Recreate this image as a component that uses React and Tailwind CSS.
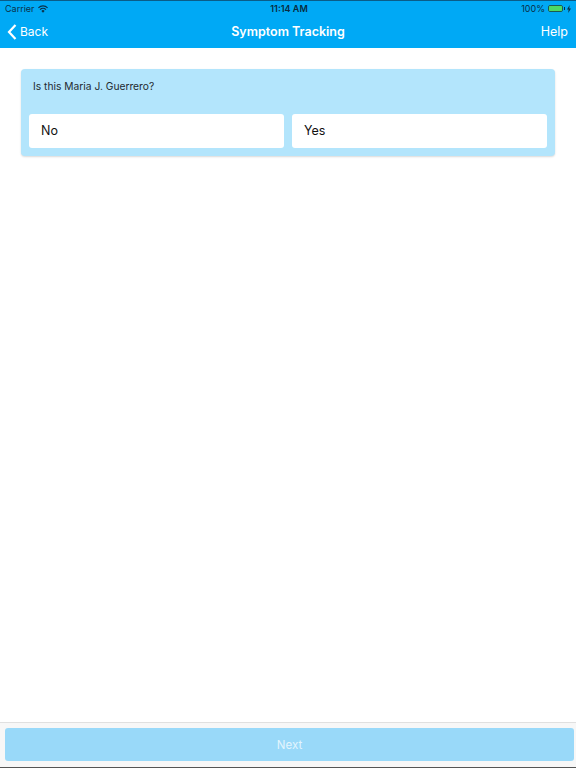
import React from 'react';

const font = "font-['Inter','Liberation_Sans',sans-serif]";

const Wifi = () => (
    <svg width="10" height="8" viewBox="0 0 22 16" fill="#0a3048">
        <path d="M11 16 7.4 12.2a5 5 0 0 1 7.2 0Z" />
        <path d="M5.6 10.4 3.6 8.3a10.5 10.5 0 0 1 14.8 0l-2 2.1a7.6 7.6 0 0 0-10.8 0Z" />
        <path d="M1.8 6.4 0 4.5a15.6 15.6 0 0 1 22 0l-1.8 1.9a13 13 0 0 0-18.4 0Z" />
    </svg>
);

const Battery = () => (
    <div className="flex items-center">
        <div className="w-[15px] h-[7px] rounded-[2px] border-[0.5px] border-[#1c5a50] flex">
            <div className="flex-1 bg-[#4cd964] rounded-[1px]" />
        </div>
        <div className="w-px h-[3px] bg-[#0a3048] ml-px" />
        <svg className="ml-[2px]" width="4" height="8" viewBox="0 0 4 8" fill="#0a3048">
            <path d="M2.6 0 0 4.5h1.6L1.2 8 4 3.4H2.3Z" />
        </svg>
    </div>
);

const Choice = ({ label }) => (
    <button className="flex-1 h-[34px] bg-white rounded-[3px] text-left pl-3 pt-px text-[12.5px] text-[#111]">
        {label}
    </button>
);

const App = () => {
    return (
        <div className={`h-[768px] flex flex-col bg-white ${font}`}>
            <header className="h-[48px] bg-[#00a9f5] border-t border-[#0a5c88] shrink-0">
                <div className="h-[15px] relative flex items-center justify-between pl-[5px] pr-[5px] text-[9px] text-[#0a3048]">
                    <div className="flex items-center gap-[3px]">
                        <span>Carrier</span>
                        <Wifi />
                    </div>
                    <span className="absolute left-0 right-0 text-center font-semibold text-[#082c40] pl-[2px]">11:14 AM</span>
                    <div className="flex items-center gap-[3px]">
                        <span>100%</span>
                        <Battery />
                    </div>
                </div>
                <div className="h-[32px] relative flex items-center justify-between pl-[7px] pr-[8px] text-white text-[12.5px]">
                    <div className="flex items-center gap-[3px] text-[12px]">
                        <svg width="10" height="16" viewBox="0 0 10 16" fill="none" stroke="white" strokeWidth="2.2">
                            <path d="M8.5 1 2 8l6.5 7" />
                        </svg>
                        <span>Back</span>
                    </div>
                    <span className="absolute left-0 right-0 text-center font-semibold">Symptom Tracking</span>
                    <span>Help</span>
                </div>
            </header>

            <main className="flex-1 px-[21px] pt-[21px]">
                <div className="h-[87px] bg-[#b3e5fc] rounded-[4px] shadow-[0_1px_2px_rgba(0,0,0,0.15)] px-2 pt-[10px]">
                    <p className="pl-1 text-[10.25px] leading-[14px] text-[#1f2a30]">Is this Maria J. Guerrero?</p>
                    <div className="flex gap-2 mt-[21px]">
                        <Choice label="No" />
                        <Choice label="Yes" />
                    </div>
                </div>
            </main>

            <footer className="h-[46px] shrink-0 bg-[#f7f7f7] border-t border-[#e0e0e0] border-b border-b-[#555] pt-[5px] pl-[5px] pr-[2px]">
                <button className="w-full h-[33px] bg-[#99d9f9] rounded-[3px] pt-[2px] text-[11.5px] text-[#e3f5fd]">Next</button>
            </footer>
        </div>
    );
};

export default App;
